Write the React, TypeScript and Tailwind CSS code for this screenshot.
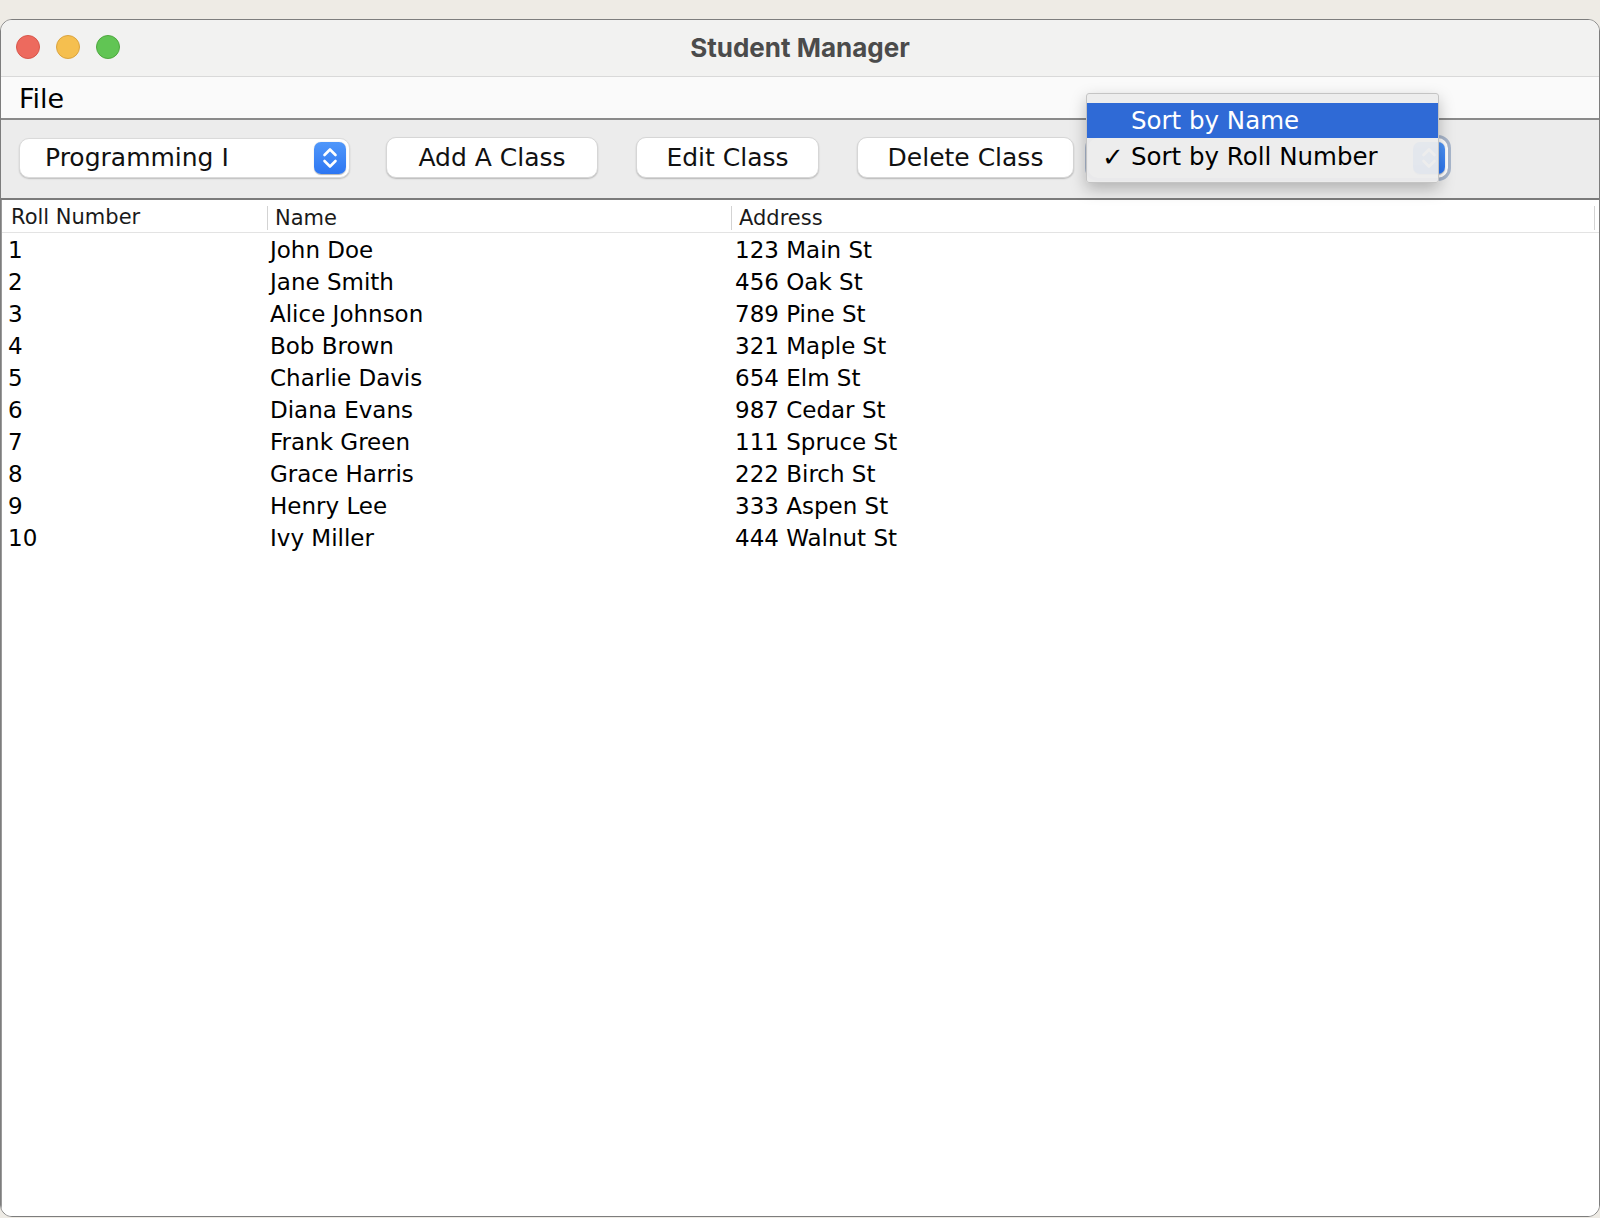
import React from "react";

const students = [
  { roll: "1", name: "John Doe", address: "123 Main St" },
  { roll: "2", name: "Jane Smith", address: "456 Oak St" },
  { roll: "3", name: "Alice Johnson", address: "789 Pine St" },
  { roll: "4", name: "Bob Brown", address: "321 Maple St" },
  { roll: "5", name: "Charlie Davis", address: "654 Elm St" },
  { roll: "6", name: "Diana Evans", address: "987 Cedar St" },
  { roll: "7", name: "Frank Green", address: "111 Spruce St" },
  { roll: "8", name: "Grace Harris", address: "222 Birch St" },
  { roll: "9", name: "Henry Lee", address: "333 Aspen St" },
  { roll: "10", name: "Ivy Miller", address: "444 Walnut St" },
];

const font = "font-['DejaVu_Sans',sans-serif]";

function Stepper() {
  return (
    <div className="flex h-[32px] w-[32px] items-center justify-center rounded-[7px] bg-gradient-to-b from-[#5097fa] to-[#2d76f2] shadow-[0_0.5px_1px_rgba(0,0,0,0.3)]">
      <svg width="32" height="32" viewBox="0 0 32 32" fill="none">
        <path
          d="M10.5 13 L16 7.5 L21.5 13 M10.5 19 L16 24.5 L21.5 19"
          stroke="white"
          strokeWidth="2.6"
          strokeLinecap="round"
          strokeLinejoin="round"
        />
      </svg>
    </div>
  );
}

function Button({ label, width }: { label: string; width: string }) {
  return (
    <button
      className={`${width} flex h-[41px] items-center justify-center rounded-[10px] border border-[#d6d6d6] bg-white text-[25px] text-[#111] shadow-[0_1px_1.5px_rgba(0,0,0,0.22)]`}
    >
      {label}
    </button>
  );
}

export default function App() {
  return (
    <div
      className={`relative h-[1218px] w-[1600px] overflow-hidden bg-[#eeebe5] ${font}`}
    >
      <div className="h-[19px] bg-[#eeebe5]" />
      <div className="flex h-[1198px] flex-col overflow-hidden rounded-[12px] border border-[#7d7d7d] bg-white">
        {/* title bar */}
        <div className="relative flex h-[57px] items-center justify-center border-b border-[#d9d9d9] bg-[#f2f2f1]">
          <div className="absolute left-[15px] top-[15px] flex gap-4">
            <span className="h-[24px] w-[24px] rounded-full border border-[#d8574b] bg-[#ed6a5e]" />
            <span className="h-[24px] w-[24px] rounded-full border border-[#dba43f] bg-[#f5bf4f]" />
            <span className="h-[24px] w-[24px] rounded-full border border-[#4fa83f] bg-[#61c554]" />
          </div>
          <span className="pb-[2px] font-['Inter',sans-serif] text-[26px] font-bold text-[#4b4b4b]">
            Student Manager
          </span>
        </div>

        {/* menu bar */}
        <div className="flex h-[43px] items-center border-b-2 border-[#8a8a8a] bg-[#fafafa] pl-[18px] pt-[3px]">
          <span className="text-[27px] text-black">File</span>
        </div>

        {/* toolbar */}
        <div className="flex h-[80px] items-center border-b-2 border-[#7b7b7b] bg-[#ececec] pb-[3px] pl-[18px]">
          <div className="flex h-[40px] w-[331px] items-center justify-between rounded-[10px] border border-[#dadada] bg-white pl-[25px] pr-[3px] shadow-[0_1px_1.5px_rgba(0,0,0,0.2)]">
            <span className="text-[25px] text-[#111]">Programming I</span>
            <Stepper />
          </div>
          <div className="ml-[36px] flex gap-[38px]">
            <Button label="Add A Class" width="w-[212px]" />
            <Button label="Edit Class" width="w-[183px]" />
            <Button label="Delete Class" width="w-[217px]" />
          </div>
          <div className="ml-[14px] flex h-[40px] w-[360px] items-center justify-end rounded-[10px] bg-white pr-[3px] outline outline-[3px] outline-[#a8b6cc] shadow-[0_1px_1.5px_rgba(0,0,0,0.2)]">
            <Stepper />
          </div>
        </div>

        {/* table */}
        <div className="flex-1 border-l border-[#9a9a9a] bg-white">
          <div className="grid h-[33px] grid-cols-[265px_464px_1fr] items-center border-b border-[#e3e3e3] pt-[2px] text-[21px] text-[#1a1a1a]">
            <div className="pl-[9px]">Roll Number</div>
            <div className="border-l border-[#d3d3d3] pl-[7px] leading-[24px]">Name</div>
            <div className="mr-[4px] border-l border-r border-[#d3d3d3] pl-[7px] leading-[24px]">
              Address
            </div>
          </div>
          {students.map((s) => (
            <div
              key={s.roll}
              className="grid h-[32px] grid-cols-[265px_464px_1fr] items-center text-[23px] text-black"
            >
              <div className="pl-[6px]">{s.roll}</div>
              <div className="pl-[3px]">{s.name}</div>
              <div className="pl-[4px]">{s.address}</div>
            </div>
          ))}
        </div>
      </div>

      {/* open sort popup */}
      <div className="absolute left-[1086px] top-[93px] w-[353px] rounded-[3px] border border-[#c4c4c4] bg-[#ececec]/95 pb-[8px] pt-[9px] shadow-[0_6px_16px_rgba(0,0,0,0.25)]">
        <div className="flex h-[35px] items-center bg-[#2f6ad6] pl-[44px] pt-[1px] text-[24.5px] text-white">
          Sort by Name
        </div>
        <div className="relative flex h-[36px] items-center pl-[44px] pt-[2px] text-[24.5px] text-black">
          <span className="absolute left-[15px] text-[26px] font-bold">✓</span>
          Sort by Roll Number
        </div>
      </div>
    </div>
  );
}
